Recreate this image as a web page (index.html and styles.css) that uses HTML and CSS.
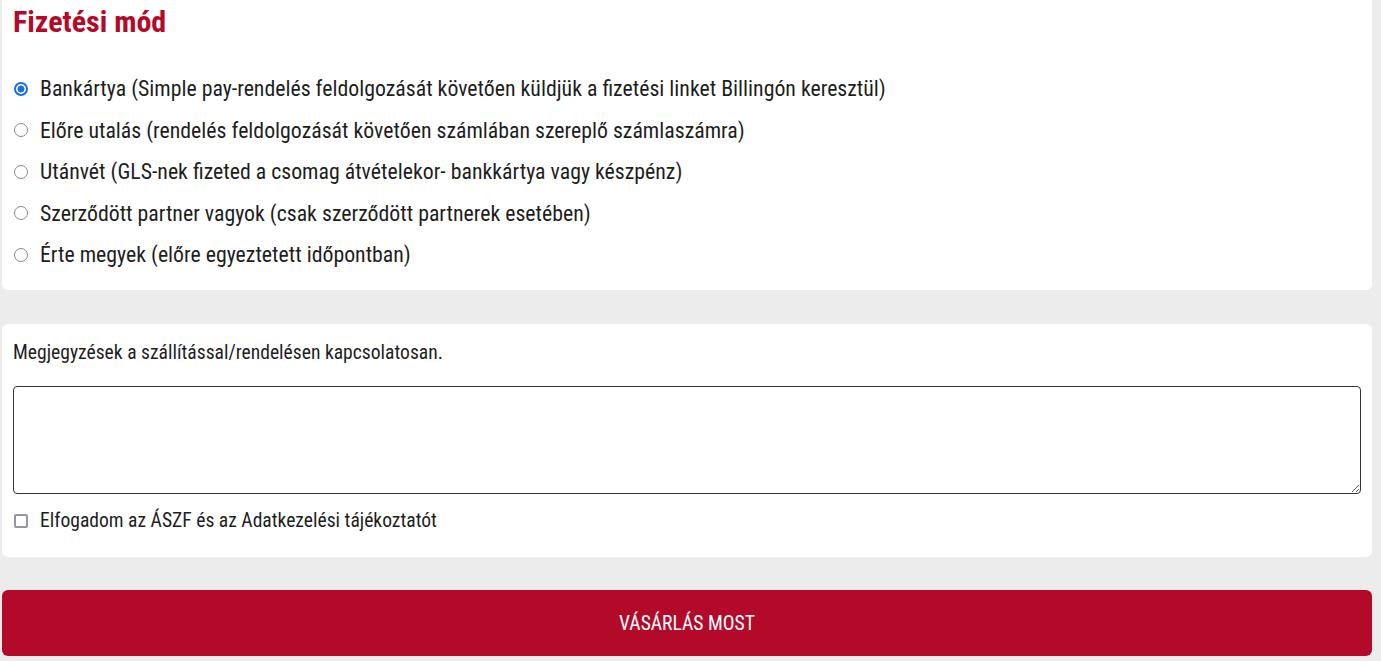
FILE: index.html
```html
<!DOCTYPE html>
<html lang="hu">
<head>
<meta charset="utf-8">
<title>Fizetési mód</title>
<link rel="stylesheet" href="styles.css">
</head>
<body>
<div class="page">
  <section class="card card-pay">
    <h2 class="title">Fizetési mód</h2>
    <div class="options">
      <label class="opt"><input class="radio" type="radio" name="pay" checked><span>Bankártya (Simple pay-rendelés feldolgozását követően küldjük a fizetési linket Billingón keresztül)</span></label>
      <label class="opt"><input class="radio" type="radio" name="pay"><span>Előre utalás (rendelés feldolgozását követően számlában szereplő számlaszámra)</span></label>
      <label class="opt"><input class="radio" type="radio" name="pay"><span>Utánvét (GLS-nek fizeted a csomag átvételekor- bankkártya vagy készpénz)</span></label>
      <label class="opt"><input class="radio" type="radio" name="pay"><span>Szerződött partner vagyok (csak szerződött partnerek esetében)</span></label>
      <label class="opt"><input class="radio" type="radio" name="pay"><span>Érte megyek (előre egyeztetett időpontban)</span></label>
    </div>
  </section>
  <section class="card card-notes">
    <label class="notes-label" for="notes">Megjegyzések a szállítással/rendelésen kapcsolatosan.</label>
    <textarea id="notes" class="notes"></textarea>
    <label class="accept"><input class="check" type="checkbox"><span>Elfogadom az ÁSZF és az Adatkezelési tájékoztatót</span></label>
  </section>
  <button class="buy" type="button">VÁSÁRLÁS MOST</button>
</div>
</body>
</html>
```
FILE: styles.css
```css
html, body {
  margin: 0;
  padding: 0;
  background: #ececec;
}
body {
  font-family: "Roboto Condensed", "Liberation Sans Narrow", "Roboto", sans-serif;
  font-stretch: condensed;
  color: #1e1e1e;
}
.page {
  display: flex;
  flex-direction: column;
  padding: 0 9px 5px 2px;
}
.card {
  background: #fff;
  border-radius: 6px;
  padding: 0 11px;
  box-sizing: border-box;
}
.card-pay {
  border-radius: 0 0 6px 6px;
  height: 290px;
  padding-top: 4px;
}
.title {
  margin: 0;
  font-size: 30px;
  font-weight: 700;
  color: #b30a2a;
  line-height: 36px;
}
.options {
  display: flex;
  flex-direction: column;
  margin-top: 28px;
}
.opt {
  display: flex;
  align-items: center;
  height: 41.5px;
  font-size: 21.8px;
}
.radio {
  appearance: none;
  -webkit-appearance: none;
  box-sizing: border-box;
  flex: none;
  margin: 0 12px 0 1px;
  width: 14px;
  height: 14px;
  border: 1.8px solid #8a8794;
  border-radius: 50%;
  background: #fff;
}
.radio:checked {
  border: 2px solid #1a6fe0;
  background: radial-gradient(circle, #1a6fe0 0 3.2px, #fff 3.8px);
}
.card-notes {
  margin-top: 34px;
  height: 233px;
  padding-top: 18px;
  display: flex;
  flex-direction: column;
}
.notes-label {
  font-size: 19.6px;
  line-height: 22px;
}
.notes {
  margin-top: 22px;
  height: 108px;
  box-sizing: border-box;
  border: 1px solid #333;
  border-radius: 4px;
  resize: vertical;
  font: inherit;
}
.accept {
  display: flex;
  align-items: center;
  margin-top: 15px;
  font-size: 19.6px;
}
.check {
  appearance: none;
  -webkit-appearance: none;
  box-sizing: border-box;
  flex: none;
  margin: 0 12px 0 1px;
  width: 14px;
  height: 14px;
  border: 2px solid #9794a3;
  border-radius: 2px;
  background: #fff;
}
.buy {
  margin-top: 33px;
  height: 66px;
  border: 0;
  border-radius: 6px;
  background: #b30a2a;
  color: #fff;
  font: inherit;
  font-size: 19.6px;
}
```
